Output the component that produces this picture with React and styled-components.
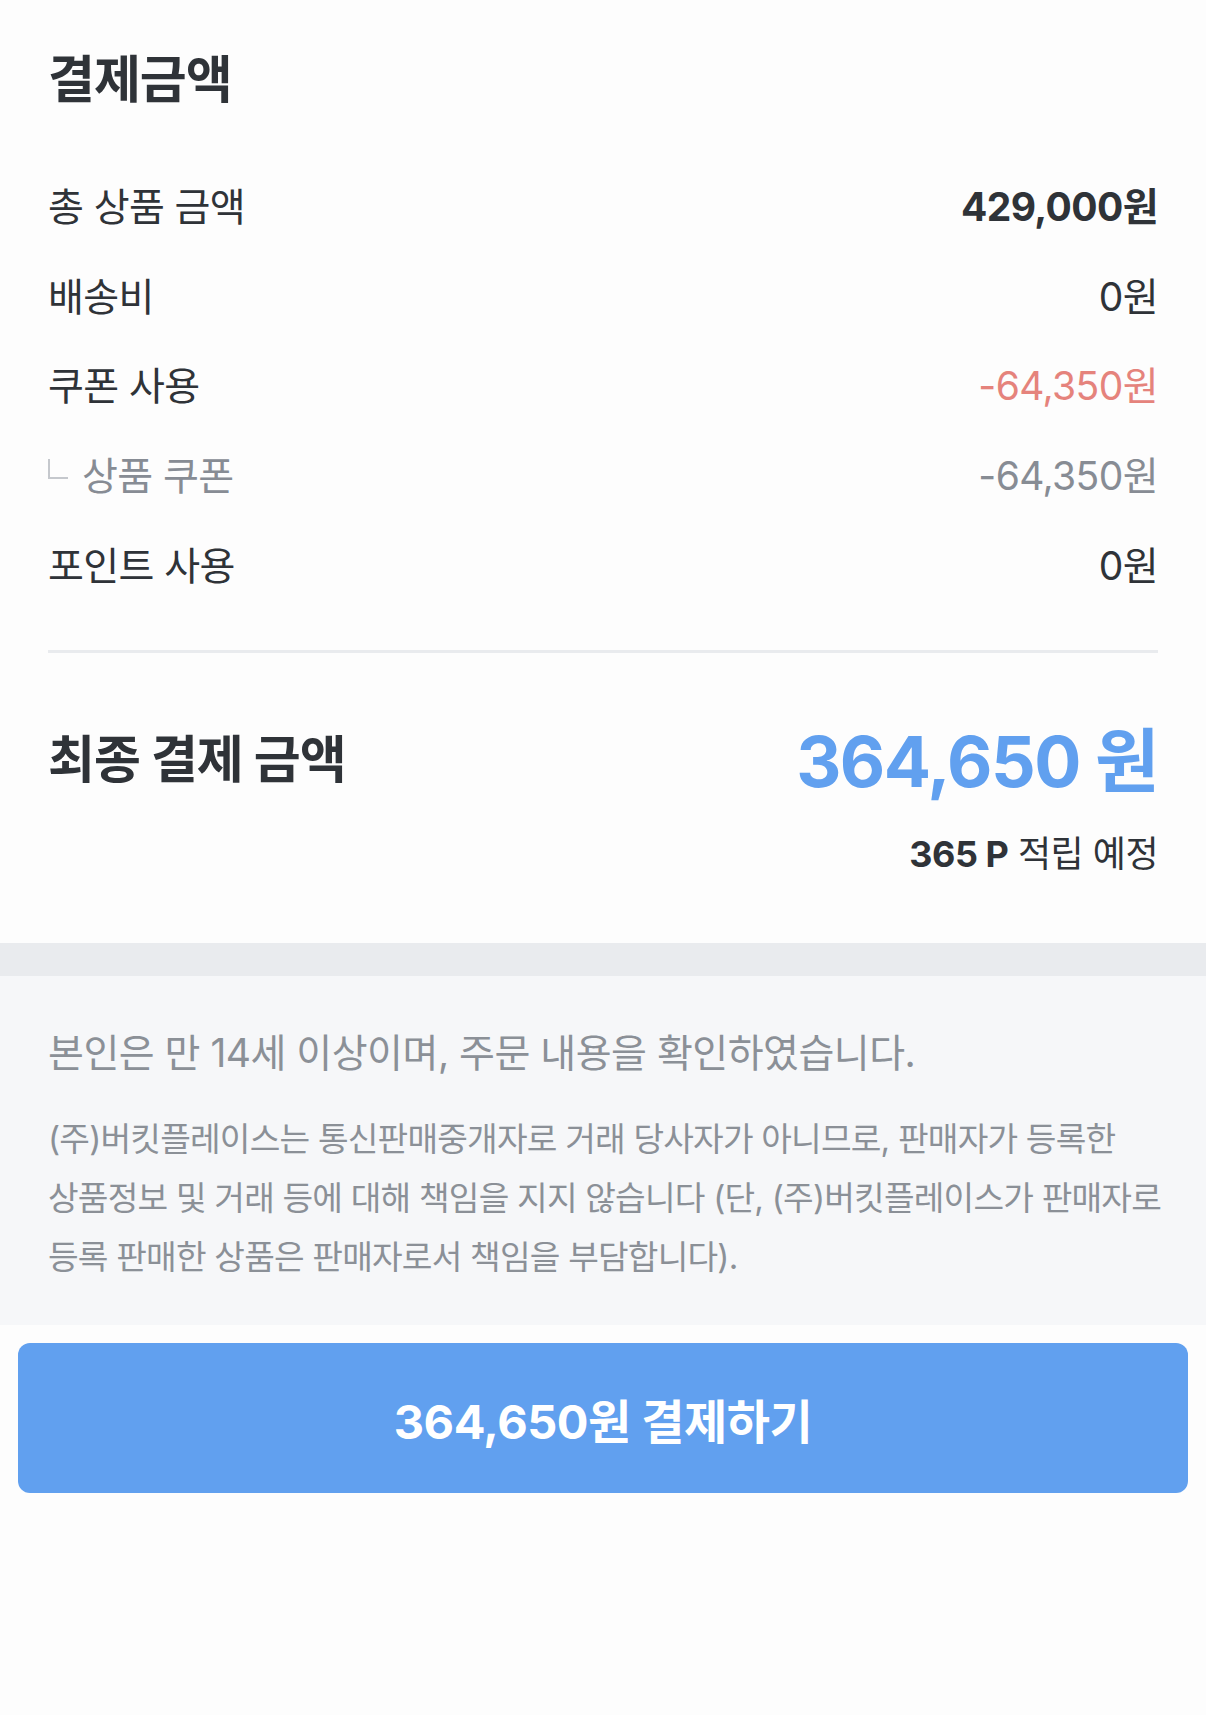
import React from 'react';
import styled, { createGlobalStyle } from 'styled-components';

const ColorText = "#2f3338"
const ColorSub = "#878c94"
const ColorBlue = "#61a0ef"
const ColorRed = "#e5837c"

const GlobalStyle = createGlobalStyle`
    body {
        margin: 0;
        background: #fdfdfd;
        font-family: Inter, "Noto Sans CJK KR", sans-serif;
        color: ${ColorText};
    }
`

const rows = [
    { label: "총 상품 금액", value: "429,000원", strong: true },
    { label: "배송비", value: "0원" },
    { label: "쿠폰 사용", value: "-64,350원", tone: "red" },
    { label: "상품 쿠폰", value: "-64,350원", tone: "sub", child: true },
    { label: "포인트 사용", value: "0원" },
]

const legal = [
    "(주)버킷플레이스는 통신판매중개자로 거래 당사자가 아니므로, 판매자가 등록한",
    "상품정보 및 거래 등에 대해 책임을 지지 않습니다 (단, (주)버킷플레이스가 판매자로",
    "등록 판매한 상품은 판매자로서 책임을 부담합니다).",
]

function App() {
    return (
        <Page>
            <GlobalStyle />
            <Summary>
                <Title>결제금액</Title>
                <List>
                    {rows.map((row) => (
                        <Row key={row.label}>
                            <Label $child={row.child}>
                                {row.child && <Corner />}
                                {row.label}
                            </Label>
                            <Value $strong={row.strong} $tone={row.tone}>{row.value}</Value>
                        </Row>
                    ))}
                </List>
                <Divider />
                <TotalRow>
                    <TotalLabel>최종 결제 금액</TotalLabel>
                    <TotalValue>364,650 원</TotalValue>
                </TotalRow>
                <Points>
                    <b>365 P</b> 적립 예정
                </Points>
            </Summary>
            <Band />
            <Notice>
                <Agree>본인은 만 14세 이상이며, 주문 내용을 확인하였습니다.</Agree>
                <Legal>
                    {legal.map((line) => (
                        <LegalLine key={line}>{line}</LegalLine>
                    ))}
                </Legal>
            </Notice>
            <Footer>
                <PayButton>364,650원 결제하기</PayButton>
            </Footer>
        </Page>
    )
}

export default App

const Page = styled.div`
    width: 1206px;
    min-height: 1715px;
    background: #fdfdfd;
`
const Summary = styled.section`
    padding: 48px 48px 0;
`
const Title = styled.h2`
    margin: 0;
    font-size: 51px;
    line-height: 64px;
    font-weight: 700;
    letter-spacing: -1px;
`
const List = styled.div`
    margin-top: 47px;
    display: flex;
    flex-direction: column;
`
const Row = styled.div`
    height: 89.7px;
    display: flex;
    align-items: center;
    justify-content: space-between;
`
const Label = styled.span`
    display: flex;
    align-items: center;
    font-size: 39px;
    letter-spacing: -0.6px;
    color: ${(p) => (p.$child ? ColorSub : ColorText)};
`
const Corner = styled.i`
    display: inline-block;
    width: 18px;
    height: 18px;
    margin: -8px 14px 0 0;
    border-left: 2px solid #c5c8cd;
    border-bottom: 2px solid #c5c8cd;
`
const Value = styled.span`
    font-size: 39px;
    letter-spacing: -0.6px;
    font-weight: ${(p) => (p.$strong ? 700 : 400)};
    color: ${(p) => (p.$tone === "red" ? ColorRed : p.$tone === "sub" ? ColorSub : ColorText)};
`
const Divider = styled.hr`
    margin: 43px 0 0;
    border: 0;
    height: 3px;
    background: #e9ebee;
`
const TotalRow = styled.div`
    margin-top: 58px;
    height: 90px;
    display: flex;
    align-items: center;
    justify-content: space-between;
`
const TotalLabel = styled.span`
    font-size: 51px;
    font-weight: 700;
    letter-spacing: -1px;
`
const TotalValue = styled.span`
    font-size: 70px;
    font-weight: 700;
    color: ${ColorBlue};
    letter-spacing: -1.5px;
`
const Points = styled.div`
    margin-top: 28px;
    text-align: right;
    font-size: 36px;
    line-height: 50px;
    letter-spacing: -0.5px;

    b {
        font-weight: 700;
    }
`
const Band = styled.div`
    margin-top: 64px;
    height: 33px;
    background: #e9ebee;
`
const Notice = styled.section`
    background: #f6f7f9;
    padding: 52px 48px 38px;
    color: #8b9097;
`
const Agree = styled.p`
    margin: 0;
    font-size: 39px;
    line-height: 50px;
    letter-spacing: -0.5px;
`
const Legal = styled.div`
    margin-top: 32px;
    font-size: 33.3px;
    line-height: 59px;
    letter-spacing: -0.8px;
`
const LegalLine = styled.p`
    margin: 0;
    white-space: nowrap;
`
const Footer = styled.div`
    padding: 18px;
`
const PayButton = styled.button`
    display: block;
    width: 100%;
    height: 150px;
    border: 0;
    border-radius: 12px;
    background: ${ColorBlue};
    color: #fff;
    font-family: Inter, "Noto Sans CJK KR", sans-serif;
    font-size: 47px;
    font-weight: 700;
    letter-spacing: -0.5px;
    cursor: pointer;
`
